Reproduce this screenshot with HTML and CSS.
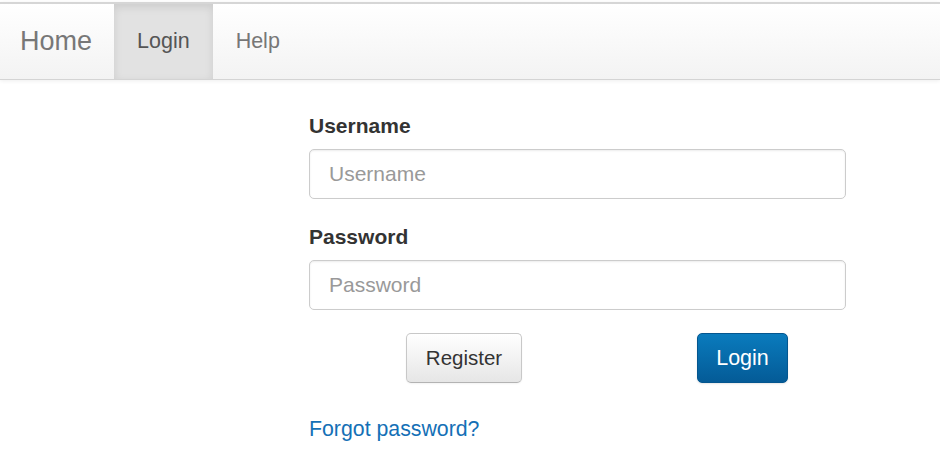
FILE: index.html
```html
<!DOCTYPE html>
<html>
<head>
<meta charset="utf-8">
<link rel="stylesheet" href="styles.css">
</head>
<body>
<nav class="navbar">
  <a class="brand" href="#">Home</a>
  <ul class="nav">
    <li class="active"><a href="#">Login</a></li>
    <li><a href="#">Help</a></li>
  </ul>
</nav>
<main class="page">
  <form class="login-form">
    <label class="field-label" for="u">Username</label>
    <input class="field-input" id="u" type="text" placeholder="Username">
    <label class="field-label second" for="p">Password</label>
    <input class="field-input" id="p" type="password" placeholder="Password">
    <div class="actions">
      <button type="button" class="btn btn-default">Register</button>
      <button type="button" class="btn btn-primary">Login</button>
    </div>
    <a class="forgot" href="#">Forgot password?</a>
  </form>
</main>
</body>
</html>
```

FILE: styles.css
```css
html, body {
  margin: 0;
  padding: 0;
  background: #fff;
  font-family: "Liberation Sans", Arial, sans-serif;
}

.navbar {
  margin-top: 2px;
  border-top: 2px solid #d6d6d6;
  border-bottom: 1px solid #d4d4d4;
  height: 75px;
  display: flex;
  align-items: stretch;
  background: linear-gradient(to bottom, #ffffff, #f3f3f3);
  box-shadow: 0 1px 4px rgba(0,0,0,0.07);
}

.brand {
  display: flex;
  align-items: center;
  padding-left: 20px;
  padding-right: 22px;
  font-size: 27px;
  color: #777;
  text-decoration: none;
}

.nav {
  list-style: none;
  margin: 0;
  padding: 0;
  display: flex;
}

.nav li a {
  display: flex;
  align-items: center;
  height: 100%;
  padding: 0 23px;
  font-size: 21.5px;
  color: #777;
  text-decoration: none;
}

.nav li.active a {
  background: #e2e2e2;
  color: #555;
  box-shadow: inset 0 3px 8px rgba(0,0,0,0.1);
}

.page {
  padding-left: 309px;
  padding-top: 32px;
}

.login-form {
  width: 537px;
  display: flex;
  flex-direction: column;
}

.field-label {
  font-size: 21px;
  font-weight: bold;
  color: #333;
  line-height: 28px;
  margin-bottom: 9px;
}

.field-label.second {
  margin-top: 24px;
}

.field-input {
  box-sizing: border-box;
  height: 50px;
  width: 537px;
  border: 1px solid #cccccc;
  border-radius: 5px;
  padding: 0 19px;
  font-family: "Liberation Sans", Arial, sans-serif;
  font-size: 21px;
  color: #555;
  box-shadow: inset 0 1px 2px rgba(0,0,0,0.08);
  outline: none;
}

.field-input::placeholder {
  color: #999;
}

.actions {
  display: flex;
  margin-top: 23px;
  padding-left: 97px;
  gap: 175px;
}

.btn {
  box-sizing: border-box;
  height: 50px;
  border-radius: 5px;
  font-family: "Liberation Sans", Arial, sans-serif;
  padding: 0;
  cursor: pointer;
}

.btn-default {
  width: 116px;
  font-size: 20.5px;
  color: #333;
  background: linear-gradient(to bottom, #ffffff, #e6e6e6);
  border: 1px solid #c8c8c8;
  border-bottom-color: #b3b3b3;
  box-shadow: inset 0 1px 0 rgba(255,255,255,0.2), 0 1px 2px rgba(0,0,0,0.05);
}

.btn-primary {
  width: 91px;
  font-size: 21.5px;
  color: #fff;
  background: linear-gradient(to bottom, #0a7bbd, #045b97);
  border: 1px solid #04568f;
  box-shadow: 0 1px 2px rgba(0,0,0,0.1);
}

.forgot {
  margin-top: 32px;
  font-size: 21.3px;
  line-height: 28px;
  color: #1470b6;
  text-decoration: none;
  align-self: flex-start;
}
```
